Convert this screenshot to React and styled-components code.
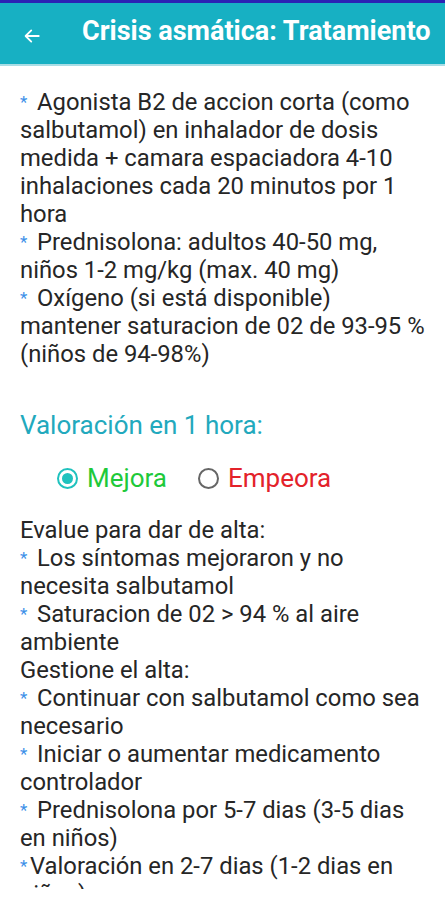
import React from "react"
import styled, { createGlobalStyle } from "styled-components"

const GlobalStyle = createGlobalStyle`
  html, body {
    margin: 0;
    padding: 0;
    background: #ffffff;
  }
  body {
    font-family: Roboto, "Noto Sans", sans-serif;
  }
`

const firstBlock = [
  { star: true, text: "Agonista B2 de accion corta (como salbutamol) en inhalador de dosis medida + camara espaciadora 4-10 inhalaciones cada 20 minutos por 1 hora" },
  { star: true, text: "Prednisolona: adultos 40-50 mg, niños 1-2 mg/kg (max. 40 mg)" },
  { star: true, text: "Oxígeno (si está disponible) mantener saturacion de 02 de 93-95 % (niños de 94-98%)" },
]

const secondBlock = [
  { text: "Evalue para dar de alta:" },
  { star: true, text: "Los síntomas mejoraron y no necesita salbutamol" },
  { star: true, text: "Saturacion de 02 > 94 % al aire ambiente" },
  { text: "Gestione el alta:" },
  { star: true, text: "Continuar con salbutamol como sea necesario" },
  { star: true, text: "Iniciar o aumentar medicamento controlador" },
  { star: true, text: "Prednisolona por 5-7 dias (3-5 dias en niños)" },
  { star: true, tight: true, text: "Valoración en 2-7 dias (1-2 dias en niños)" },
]

function Lines({ items, spaced }) {
  return (
    <Block $spaced={spaced}>
      {items.map((item, i) => (
        <Line key={i}>
          {item.star && <Star $tight={item.tight}>*</Star>}
          {item.text}
        </Line>
      ))}
    </Block>
  )
}

export default function App() {
  return (
    <Screen>
      <GlobalStyle />
      <StatusBar />
      <Toolbar>
        <BackButton aria-label="Volver">
          <svg width="18" height="18" viewBox="0 0 24 24" fill="none">
            <path
              d="M21 12H4M11 4.5L3.5 12l7.5 7.5"
              stroke="#ffffff"
              strokeWidth="2.4"
              strokeLinecap="round"
              strokeLinejoin="round"
            />
          </svg>
        </BackButton>
        <Title>Crisis asmática: Tratamiento</Title>
      </Toolbar>
      <Content>
        <Lines items={firstBlock} />
        <Heading>Valoración en 1 hora:</Heading>
        <RadioGroup>
          <RadioOption>
            <RadioCircle $checked />
            <RadioLabel $color="#1ec93a">Mejora</RadioLabel>
          </RadioOption>
          <RadioOption>
            <RadioCircle />
            <RadioLabel $color="#e3222a">Empeora</RadioLabel>
          </RadioOption>
        </RadioGroup>
        <Lines items={secondBlock} spaced />
      </Content>
    </Screen>
  )
}

const Screen = styled.div`
  width: 445px;
  height: 900px;
  display: flex;
  flex-direction: column;
  overflow: hidden;
  background: #ffffff;
`

const StatusBar = styled.div`
  height: 3px;
  background: #2b22b4;
  flex-shrink: 0;
`

const Toolbar = styled.div`
  height: 61px;
  flex-shrink: 0;
  background: #17b0c3;
  border-bottom: 2px solid #a9dde5;
  display: flex;
  align-items: center;
`

const BackButton = styled.div`
  width: 82px;
  height: 100%;
  display: flex;
  align-items: center;
  padding-left: 23px;
  padding-top: 4px;
  box-sizing: border-box;
`

const Title = styled.h1`
  margin: 0;
  margin-top: -6px;
  color: #ffffff;
  font-family: Roboto, sans-serif;
  font-size: 27px;
  font-weight: 700;
  white-space: nowrap;
`

const Content = styled.div`
  height: 823px;
  flex-shrink: 0;
  overflow: hidden;
  padding: 22px 14px 0 20px;
  box-sizing: border-box;
`

const Block = styled.div`
  margin-top: ${(p) => (p.$spaced ? "22px" : "0")};
  font-family: Roboto, sans-serif;
  font-size: 23.8px;
  line-height: 28px;
  color: #262626;
`

const Line = styled.div``

const Star = styled.span`
  display: inline-block;
  width: ${(p) => (p.$tight ? "10px" : "17px")};
  color: #3b8fe8;
  font-size: 17px;
  vertical-align: 2px;
`

const Heading = styled.h2`
  margin: 41px 0 0;
  font-family: Roboto, sans-serif;
  font-size: 26px;
  font-weight: 400;
  line-height: 32px;
  color: #22a9bd;
`

const RadioGroup = styled.div`
  display: flex;
  align-items: center;
  gap: 31px;
  height: 32px;
  margin: 21px 0 0 37px;
`

const RadioOption = styled.div`
  display: flex;
  align-items: center;
  gap: 9px;
`

const RadioCircle = styled.span`
  width: 21px;
  height: 21px;
  border-radius: 50%;
  box-sizing: border-box;
  border: 2px solid ${(p) => (p.$checked ? "#1fc2be" : "#666666")};
  display: flex;
  align-items: center;
  justify-content: center;

  &::after {
    content: "";
    width: 11px;
    height: 11px;
    border-radius: 50%;
    background: ${(p) => (p.$checked ? "#1fc2be" : "transparent")};
  }
`

const RadioLabel = styled.span`
  font-family: Roboto, sans-serif;
  font-size: 26px;
  line-height: 32px;
  color: ${(p) => p.$color};
`
